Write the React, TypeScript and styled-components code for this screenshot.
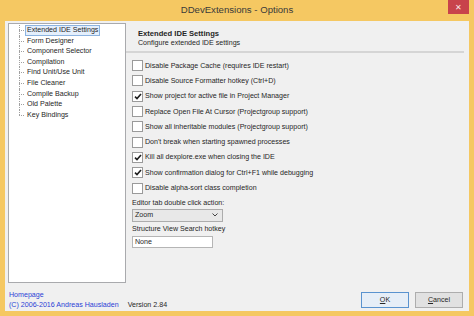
import React from "react";
import styled, { createGlobalStyle } from "styled-components";

const GlobalStyle = createGlobalStyle`
  html, body {
    margin: 0;
    padding: 0;
    background: #f5c862;
  }
  body {
    font-family: "Liberation Sans", Arial, sans-serif;
    font-size: 7.1px;
    color: #262626;
  }
`;

const Window = styled.div`
  width: 474px;
  height: 316px;
  display: flex;
  flex-direction: column;
  background: #f5c862;
  overflow: hidden;
`;

const TitleBar = styled.div`
  height: 21px;
  display: grid;
  grid-template-columns: 1fr auto 1fr;
  align-items: start;
`;

const Title = styled.div`
  grid-column: 2;
  font-size: 9.6px;
  color: #3a3a3a;
  line-height: 20px;
`;

const CloseButton = styled.div`
  grid-column: 3;
  justify-self: end;
  width: 21px;
  height: 14px;
  margin-right: 5px;
  background: #c8434b;
  color: #fbe3e3;
  font-size: 8px;
  display: flex;
  align-items: center;
  justify-content: center;
`;

const Client = styled.div`
  flex: 1;
  margin: 0 5px 5px 5px;
  background: #f0f0f0;
  display: flex;
  flex-direction: column;
  padding: 2px 3px 0 3px;
`;

const Body = styled.div`
  height: 260px;
  display: flex;
`;

const Tree = styled.div`
  width: 116px;
  border: 1px solid #a9aaad;
  background: #fff;
  padding-top: 1px;
`;

const TreeList = styled.ul`
  list-style: none;
  margin: 0;
  padding: 0 0 0 10px;
`;

const TreeItem = styled.li<{ $last?: boolean }>`
  position: relative;
  height: 10.6px;
  line-height: 10.6px;
  padding-left: 6px;
  white-space: nowrap;
  &::before {
    content: "";
    position: absolute;
    left: 0;
    top: 5px;
    width: 5px;
    border-top: 1px dotted #a0a0a0;
  }
  &::after {
    content: "";
    position: absolute;
    left: 0;
    top: 0;
    height: ${(p) => (p.$last ? "5px" : "100%")};
    border-left: 1px dotted #a0a0a0;
  }
`;

const ItemLabel = styled.span<{ $selected?: boolean }>`
  display: inline-block;
  padding: 0 1px;
  line-height: 9px;
  border: 1px solid ${(p) => (p.$selected ? "#8cb3e0" : "transparent")};
  background: ${(p) => (p.$selected ? "#e4effc" : "transparent")};
`;

const Pane = styled.div`
  flex: 1;
  display: flex;
  flex-direction: column;
`;

const PaneHeader = styled.div`
  height: 30px;
  padding: 6px 0 0 12px;
  box-sizing: border-box;
  border-bottom: 2px solid #d5d5d5;
  margin-right: 2px;
`;

const HeaderTitle = styled.div`
  font-weight: bold;
  font-size: 7.6px;
  line-height: 10px;
`;

const HeaderSub = styled.div`
  line-height: 9px;
`;

const Options = styled.div`
  display: flex;
  flex-direction: column;
  padding: 5px 0 0 6px;
`;

const CheckRow = styled.label`
  height: 15.3px;
  display: flex;
  align-items: center;
  gap: 2px;
  white-space: nowrap;
`;

const Box = styled.span`
  width: 9px;
  height: 9px;
  border: 1px solid #9a9a9a;
  background: #fff;
  display: flex;
  align-items: center;
  justify-content: center;
`;

const FieldLabel = styled.div`
  height: 12px;
  line-height: 12px;
  margin-top: 1px;
`;

const Combo = styled.div`
  width: 83px;
  height: 11px;
  border: 1px solid #acacac;
  background: #e8e8e8;
  display: flex;
  align-items: center;
  justify-content: space-between;
  padding: 0 4px 0 2px;
  box-sizing: content-box;
`;

const EditBox = styled.div`
  width: 77px;
  height: 10px;
  border: 1px solid #b5b5b5;
  background: #fff;
  padding-left: 2px;
  line-height: 10px;
  margin-top: 1px;
`;

const Footer = styled.div`
  flex: 1;
  display: flex;
  justify-content: space-between;
  align-items: flex-start;
  padding: 8px 3px 0 1px;
`;

const Credits = styled.div`
  display: flex;
  flex-direction: column;
  line-height: 10px;
  margin-top: -1px;
`;

const Link = styled.span`
  color: #2b3fd6;
`;

const Version = styled.span`
  margin-left: 9px;
`;

const Buttons = styled.div`
  display: flex;
  gap: 6px;
  margin-top: 1px;
`;

const Button = styled.div<{ $default?: boolean }>`
  width: 46px;
  height: 14px;
  border: 1px solid ${(p) => (p.$default ? "#5a93cf" : "#adadad")};
  background: ${(p) => (p.$default ? "#e6eef7" : "#e1e1e1")};
  display: flex;
  align-items: center;
  justify-content: center;
`;

const pages = [
  "Extended IDE Settings",
  "Form Designer",
  "Component Selector",
  "Compilation",
  "Find Unit/Use Unit",
  "File Cleaner",
  "Compile Backup",
  "Old Palette",
  "Key Bindings",
];

const options: [string, boolean][] = [
  ["Disable Package Cache (requires IDE restart)", false],
  ["Disable Source Formatter hotkey (Ctrl+D)", false],
  ["Show project for active file in Project Manager", true],
  ["Replace Open File At Cursor (Projectgroup support)", false],
  ["Show all inheritable modules (Projectgroup support)", false],
  ["Don't break when starting spawned processes", false],
  ["Kill all dexplore.exe when closing the IDE", true],
  ["Show confirmation dialog for Ctrl+F1 while debugging", true],
  ["Disable alpha-sort class completion", false],
];

function Check() {
  return (
    <svg width="8" height="7" viewBox="0 0 8 7">
      <path d="M1 3.6 L3 5.6 L7 1" fill="none" stroke="#1e1e1e" strokeWidth="1.6" />
    </svg>
  );
}

function Chevron() {
  return (
    <svg width="6" height="4" viewBox="0 0 6 4">
      <path d="M0.5 0.5 L3 3 L5.5 0.5" fill="none" stroke="#444" strokeWidth="1" />
    </svg>
  );
}

export default function App() {
  return (
    <>
      <GlobalStyle />
      <Window>
        <TitleBar>
          <Title>DDevExtensions - Options</Title>
          <CloseButton>✕</CloseButton>
        </TitleBar>
        <Client>
          <Body>
            <Tree>
              <TreeList>
                {pages.map((p, i) => (
                  <TreeItem key={p} $last={i === pages.length - 1}>
                    <ItemLabel $selected={i === 0}>{p}</ItemLabel>
                  </TreeItem>
                ))}
              </TreeList>
            </Tree>
            <Pane>
              <PaneHeader>
                <HeaderTitle>Extended IDE Settings</HeaderTitle>
                <HeaderSub>Configure extended IDE settings</HeaderSub>
              </PaneHeader>
              <Options>
                {options.map(([text, checked]) => (
                  <CheckRow key={text}>
                    <Box>{checked && <Check />}</Box>
                    {text}
                  </CheckRow>
                ))}
                <FieldLabel>Editor tab double click action:</FieldLabel>
                <Combo>
                  <span>Zoom</span>
                  <Chevron />
                </Combo>
                <FieldLabel>Structure View Search hotkey</FieldLabel>
                <EditBox>None</EditBox>
              </Options>
            </Pane>
          </Body>
          <Footer>
            <Credits>
              <Link>Homepage</Link>
              <span>
                <Link>(C) 2006-2016 Andreas Hausladen</Link>
                <Version>Version 2.84</Version>
              </span>
            </Credits>
            <Buttons>
              <Button $default>
                <span>
                  <u>O</u>K
                </span>
              </Button>
              <Button>
                <span>
                  <u>C</u>ancel
                </span>
              </Button>
            </Buttons>
          </Footer>
        </Client>
      </Window>
    </>
  );
}
